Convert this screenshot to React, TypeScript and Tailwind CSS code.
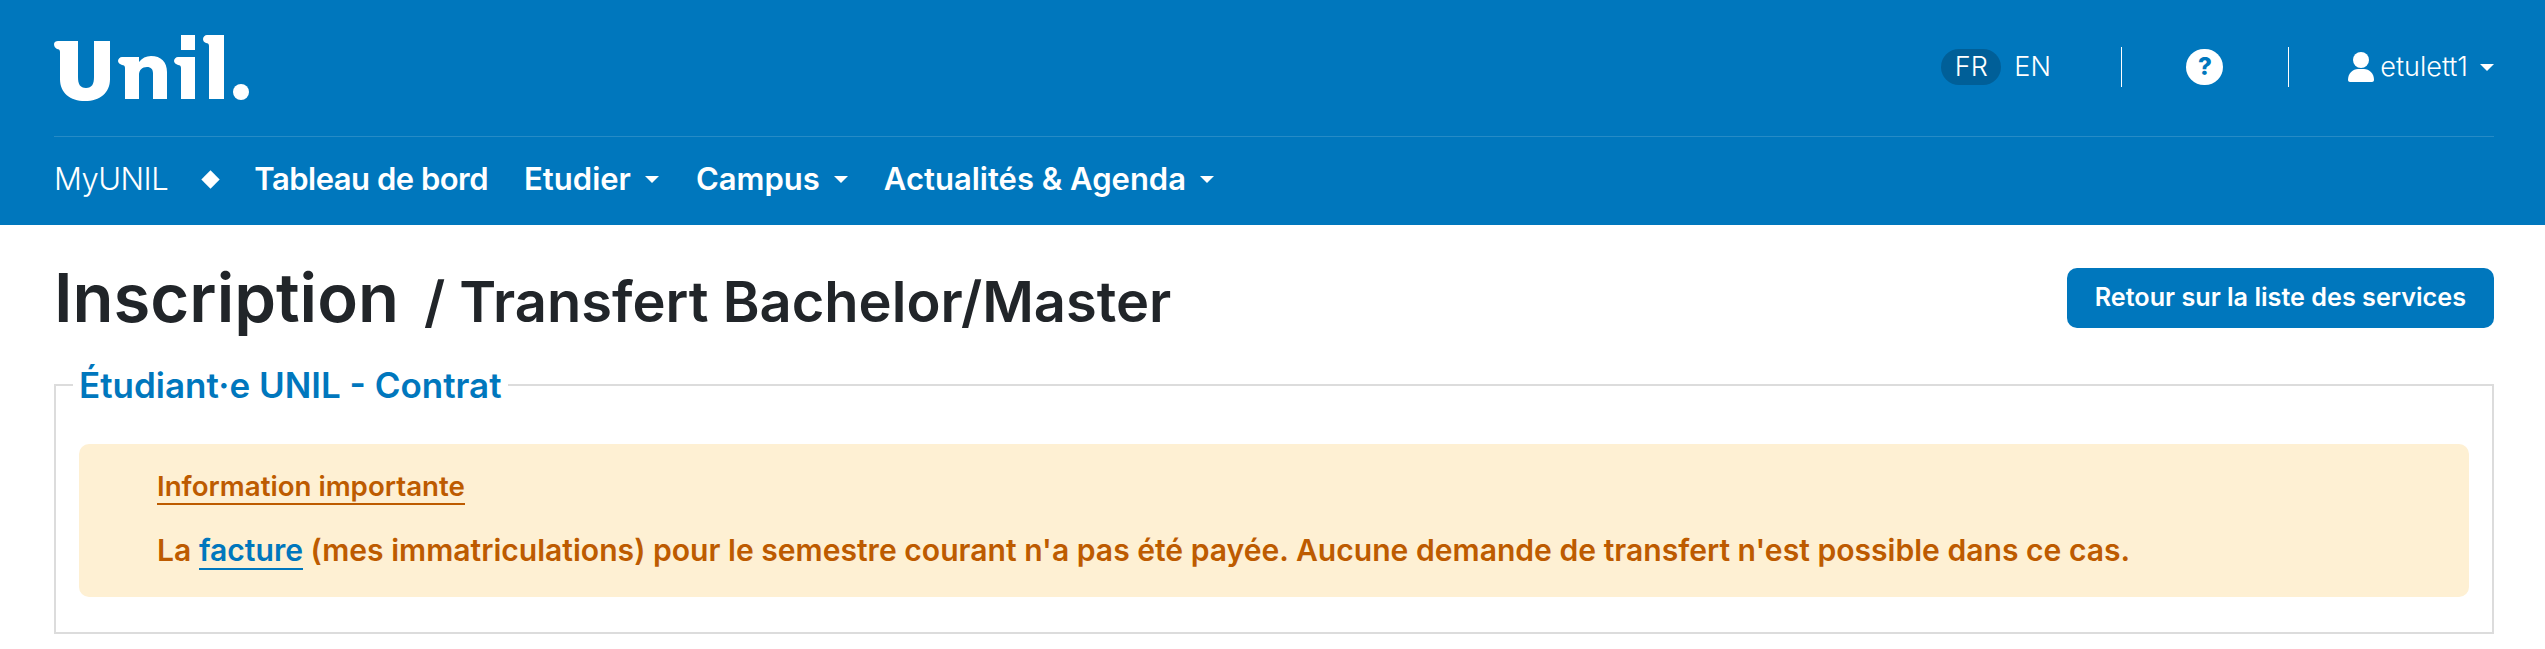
import React from 'react';

const Caret = ({ className = '' }: { className?: string }) => (
  <span className={`inline-block w-0 h-0 border-x-[7px] border-x-transparent border-t-[7px] border-t-white ${className}`} />
);

const Logo = () => (
  <svg width="196" height="66" viewBox="0 0 196 66" fill="white" className="block">
    <path d="M4 6H24V42C24 49 26 53 32 53C38 53 40 49 40 42V6H56V44C56 58 46 66 31 66C16 66 6 58 6 44V17C6 15 5 14 3 14C1 13 0 11 0 9C0 7 2 6 4 6Z" />
    <path d="M68 22H85V27C88 23 92 21 97 21C107 21 113 27 113 37V64H99V39C99 34 97 32 93 32C88 32 85 35 85 40V64H71V33C71 31 70 30 68 30C66 29 64 28 64 26C64 24 66 22 68 22Z" />
    <path d="M124 22H141V64H127V33C127 31 126 30 124 30C122 29 120 28 120 26C120 24 122 22 124 22ZM127 0H141V15H127Z" />
    <path d="M153 0H170V64H155V11C155 9 154 8 152 8C150 7 149 6 149 4C149 2 151 0 153 0Z" />
    <circle cx="187" cy="57" r="8" />
  </svg>
);

export default function App() {
  return (
    <div className="min-h-[649px] bg-white font-['Inter','Liberation_Sans',sans-serif] text-[#212529]">
      <header className="h-[225px] bg-[#0077bd] pl-[54px] pr-[51px] text-white">
        <div className="flex h-[137px] items-start justify-between border-b border-white/15 pt-[35px]">
          <Logo />
          <div className="flex items-center pt-[12px] text-[27px] font-light">
            <span className="flex h-[36px] w-[60px] items-center justify-center rounded-full bg-[#005f98]">FR</span>
            <span className="ml-[13px] w-[36px]">EN</span>
            <div className="ml-[71px] h-[40px] w-px bg-white" />
            <div className="ml-[64px] flex h-[36px] w-[37px] items-center justify-center rounded-full bg-white text-[24px] font-extrabold text-[#0077bd]">?</div>
            <div className="ml-[65px] h-[40px] w-px bg-white" />
            <svg width="26" height="30" viewBox="0 0 26 30" fill="white" className="ml-[59px]">
              <circle cx="13" cy="8" r="8" />
              <path d="M0 28C0 21 5 17 10 17H16C21 17 26 21 26 28C26 29 25 30 24 30H2C1 30 0 29 0 28Z" />
            </svg>
            <span className="ml-[6px]">etulett1</span>
            <Caret className="ml-[12px]" />
          </div>
        </div>
        <nav className="flex h-[87px] items-center pb-[2px] text-[31px] font-semibold">
          <span className="font-light tracking-[-0.5px]">MyUNIL</span>
          <span className="ml-[36px] mr-[37px] block h-[13px] w-[13px] rotate-45 bg-white" />
          <span className="tracking-[-0.5px]">Tableau de bord</span>
          <span className="ml-[36px]">Etudier</span>
          <Caret className="ml-[14px]" />
          <span className="ml-[37px]">Campus</span>
          <Caret className="ml-[14px]" />
          <span className="ml-[36px]">Actualités &amp; Agenda</span>
          <Caret className="ml-[14px]" />
        </nav>
      </header>

      <main className="pl-[54px] pr-[51px]">
        <div className="flex h-[140px] items-center justify-between pt-[6px]">
          <h1 className="flex items-baseline font-semibold">
            <span className="text-[67px]">Inscription</span>
            <span className="ml-[25px] text-[56px]">/ Transfert Bachelor/Master</span>
          </h1>
          <button className="h-[60px] rounded-[10px] bg-[#0077bd] px-[28px] text-[25.2px] font-semibold text-white">
            Retour sur la liste des services
          </button>
        </div>

        <fieldset className="border-2 border-[#dcdcdc] px-[23px] pb-[35px] pt-[39px]">
          <legend className="-ml-[6px] px-[6px] text-[35px] font-semibold leading-[40px] text-[#0077bd]">Étudiant·e UNIL - Contrat</legend>
          <div className="h-[153px] rounded-[10px] bg-[#fef0d3] pl-[78px] pt-[24px] font-semibold text-[#bd5b00]">
            <p className="text-[27.7px] leading-[36px]"><span className="border-b-2 border-[#bd5b00]">Information importante</span></p>
            <p className="mt-[24px] text-[30.1px]">
              La <span className="border-b-2 border-[#0077bd] text-[#0077bd]">facture</span> (mes immatriculations) pour le semestre courant n'a pas été payée. Aucune demande de transfert n'est possible dans ce cas.
            </p>
          </div>
        </fieldset>
      </main>
    </div>
  );
}
